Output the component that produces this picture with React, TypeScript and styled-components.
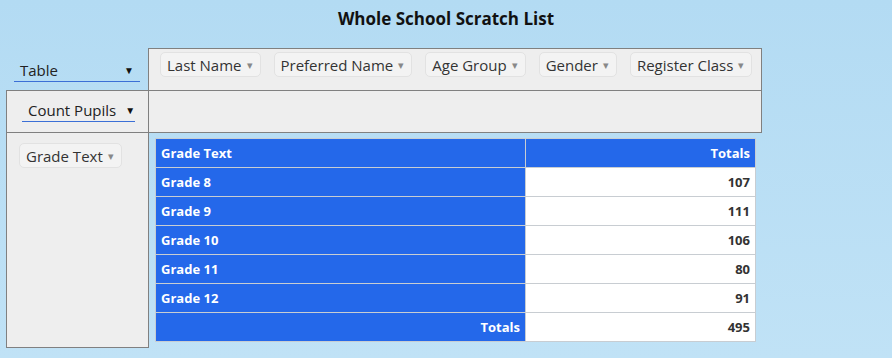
import React from 'react';
import styled, { createGlobalStyle } from 'styled-components';

const unusedAttrs = ['Last Name', 'Preferred Name', 'Age Group', 'Gender', 'Register Class'];

const rows = [
	{ label: 'Grade 8', total: 107 },
	{ label: 'Grade 9', total: 111 },
	{ label: 'Grade 10', total: 106 },
	{ label: 'Grade 11', total: 80 },
	{ label: 'Grade 12', total: 91 },
];

const grandTotal = rows.reduce((sum, r) => sum + r.total, 0);

const App = () => {
	return (
		<>
			<GlobalStyle />
			<Page>
				<Title>Whole School Scratch List</Title>
				<PivotGrid>
					<Cell>
						<Dropdown width={126} offset={8}>
							<span>Table</span>
							<Caret>▼</Caret>
						</Dropdown>
					</Cell>
					<Cell top left right shaded>
						<ChipList>
							{unusedAttrs.map(a => (
								<Chip key={a}>
									{a}
									<ChipArrow>▾</ChipArrow>
								</Chip>
							))}
						</ChipList>
					</Cell>

					<Cell top left shaded>
						<Dropdown width={113} offset={15} compact>
							<span>Count Pupils</span>
							<Caret>▼</Caret>
						</Dropdown>
					</Cell>
					<Cell top left right shaded />

					<Cell top left bottom shaded>
						<RowChips>
							<Chip>
								Grade Text
								<ChipArrow>▾</ChipArrow>
							</Chip>
						</RowChips>
					</Cell>
					<Cell top left>
						<Output>
							<PivotTable>
								<thead>
									<tr>
										<HeadCell>Grade Text</HeadCell>
										<HeadCell align="right">Totals</HeadCell>
									</tr>
								</thead>
								<tbody>
									{rows.map(r => (
										<tr key={r.label}>
											<HeadCell>{r.label}</HeadCell>
											<ValueCell>{r.total}</ValueCell>
										</tr>
									))}
									<tr>
										<HeadCell align="right">Totals</HeadCell>
										<ValueCell>{grandTotal}</ValueCell>
									</tr>
								</tbody>
							</PivotTable>
						</Output>
					</Cell>
				</PivotGrid>
			</Page>
		</>
	);
}

export default App;

const GlobalStyle = createGlobalStyle`
	html, body {
		margin: 0;
		padding: 0;
	}
	body {
		font-family: "Open Sans", "Liberation Sans", sans-serif;
		background: linear-gradient(180deg, #b3dbf3 0%, #c0e2f6 100%);
		min-height: 358px;
		color: #333;
	}
`;

const Page = styled('div')`
	width: 892px;
	height: 358px;
	overflow: hidden;
`;

const Title = styled('h1')`
	margin: 0;
	padding-top: 7px;
	height: 48px;
	box-sizing: border-box;
	text-align: center;
	font-size: 17px;
	font-weight: 700;
	color: #111;
	line-height: 24px;
`;

const PivotGrid = styled('div')`
	display: grid;
	grid-template-columns: 142px 614px;
	grid-template-rows: 42px 42px 216px;
	margin-left: 6px;
`;

interface ICellProps {
	top?: boolean;
	left?: boolean;
	right?: boolean;
	bottom?: boolean;
	shaded?: boolean;
}

const Cell = styled('div').withConfig({
	shouldForwardProp: p => !['top', 'left', 'right', 'bottom', 'shaded'].includes(p),
})<ICellProps>`
	box-sizing: border-box;
	background: ${p => (p.shaded ? '#eeeeee' : 'transparent')};
	border-top: ${p => (p.top ? '1px solid #808080' : 'none')};
	border-left: ${p => (p.left ? '1px solid #808080' : 'none')};
	border-right: ${p => (p.right ? '1px solid #808080' : 'none')};
	border-bottom: ${p => (p.bottom ? '1px solid #808080' : 'none')};
	min-width: 0;
`;

const Dropdown = styled('div').withConfig({
	shouldForwardProp: p => !['width', 'offset', 'compact'].includes(p),
})<{ width: number; offset: number; compact?: boolean }>`
	display: flex;
	align-items: center;
	justify-content: ${p => (p.compact ? 'flex-start' : 'space-between')};
	gap: 9px;
	box-sizing: border-box;
	width: ${p => p.width}px;
	margin-left: ${p => p.offset}px;
	margin-top: ${p => (p.compact ? 7 : 10)}px;
	height: 24px;
	padding: 0 6px;
	border-bottom: 1px solid #3b6fd6;
	font-size: 15px;
	color: #222;
	line-height: 22px;
	white-space: nowrap;
`;

const Caret = styled('span')`
	font-size: 10px;
	color: #111;
	line-height: 22px;
`;

const ChipList = styled('div')`
	display: flex;
	gap: 13px;
	padding: 3px 0 0 11px;
`;

const RowChips = styled('div')`
	padding: 10px 0 0 12px;
`;

const Chip = styled('div')`
	display: inline-flex;
	align-items: center;
	gap: 5px;
	box-sizing: border-box;
	height: 25px;
	padding: 0 7px 0 6px;
	border: 1px solid #e2e2e2;
	border-radius: 5px;
	background: #f3f3f3;
	font-size: 15px;
	color: #333;
	white-space: nowrap;
`;

const ChipArrow = styled('span')`
	font-size: 11px;
	color: #888;
`;

const Output = styled('div')`
	padding: 5px 0 0 6px;
`;

const PivotTable = styled('table')`
	border-collapse: collapse;
	width: 601px;
	font-size: 13px;
	font-weight: 700;
	& td, & th {
		border: 1px solid #c8cdd2;
		height: 29px;
		padding: 0 5px;
		box-sizing: border-box;
	}
`;

const HeadCell = styled('th')<{ align?: 'left' | 'right' }>`
	background: #2468ea;
	color: #fff;
	text-align: ${p => p.align || 'left'};
	width: 370px;
	&:last-child {
		width: auto;
	}
`;

const ValueCell = styled('td')`
	background: #fff;
	color: #333;
	text-align: right;
`;
